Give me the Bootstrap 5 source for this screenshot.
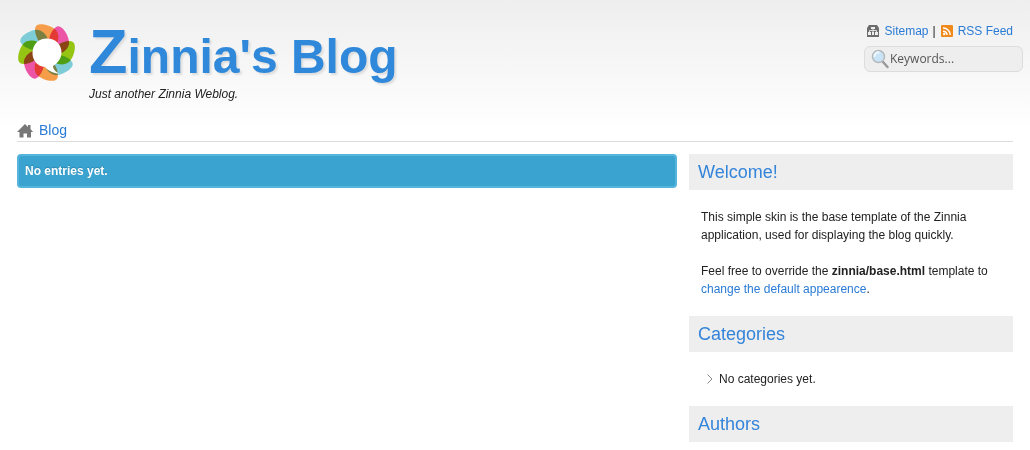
<!DOCTYPE html>
<html lang="en">
<head>
<meta charset="utf-8">
<meta name="viewport" content="width=device-width, initial-scale=1">
<title>Zinnia's Blog</title>
<link href="https://cdn.jsdelivr.net/npm/bootstrap@5.3.0/dist/css/bootstrap.min.css" rel="stylesheet">
<style>
body { font: 12px/18px "Liberation Sans", Arial, sans-serif; color: #222; background: #fff linear-gradient(#eee, #fff 130px) no-repeat; }
a { color: #2a7bd5; text-decoration: none; }
a:hover { text-decoration: underline; }
.page { padding: 0 17px; }
.masthead { padding-top: 23px; height: 122px; }
.brand { gap: 12px; }
.petals use { mix-blend-mode: multiply; }
.site-title { font-size: 48px; line-height: 56px; font-weight: bold; margin: 0; text-shadow: 2px 2px 2px #ddd; }
.site-title a { color: #2f88da; display: block; }
.site-title a::first-letter { font-size: 63px; line-height: 56px; }
.tagline { font-style: italic; margin: 0; }
.tools { margin-right: -10px; }
.tool-links { line-height: 16px; margin-right: 10px; }
.search { width: 159px; height: 26px; margin-top: 7px; padding: 0 6px; border: 1px solid #ddd; border-radius: 6px; background: #eee; }
.search input { border: 0; background: transparent; font: 500 12px/16px "Open Sans", sans-serif; color: #555; min-width: 0; padding: 0; outline: 0; }
.search input::placeholder { color: #555; opacity: 1; }
.crumbs { font-size: 14px; line-height: 16px; height: 20px; gap: 6px; border-bottom: 1px solid #ddd; }
.columns { display: grid; grid-template-columns: 660fr 324fr; gap: 12px; padding-top: 12px; align-items: start; }
.notice { border: 2px solid #56b5dc; border-radius: 4px; background: #3aa3cf; color: #fff; font-weight: bold; padding: 6px; text-shadow: 0 -1px 1px #2c86ae; }
.side-title { font-size: 18px; line-height: 36px; font-weight: normal; color: #3484da; background: #eee; padding: 0 9px; margin: 0; }
.side-body { padding: 18px 12px; }
.side-body p { margin: 0 0 18px; }
.side-body p:last-child { margin: 0; }
.side-body ul { padding-left: 6px; }
.side-body li { gap: 6px; }
</style>
</head>
<body>
<div class="page">
  <header>
    <div class="masthead d-flex justify-content-between">
      <div class="brand d-flex">
        <svg class="flex-shrink-0" width="60" height="60" viewBox="0 0 60 60" aria-hidden="true">
          <defs><path id="petal" d="M23 20C18 13 17 6 19 3C22 -1 34 2 39 7C42 11 42 16 40 21L30 26Z"/></defs>
          <g class="petals" opacity=".92">
            <use href="#petal" fill="#f6963c"/>
            <use href="#petal" fill="#ec48a0" transform="rotate(45 29.5 29.5)"/>
            <use href="#petal" fill="#8ec000" transform="rotate(90 29.5 29.5)"/>
            <use href="#petal" fill="#74c9d6" transform="rotate(135 29.5 29.5)"/>
            <use href="#petal" fill="#f6963c" transform="rotate(180 29.5 29.5)"/>
            <use href="#petal" fill="#ec48a0" transform="rotate(225 29.5 29.5)"/>
            <use href="#petal" fill="#8ec000" transform="rotate(270 29.5 29.5)"/>
            <use href="#petal" fill="#74c9d6" transform="rotate(315 29.5 29.5)"/>
          </g>
          <path fill="#fff" d="M30 15.500C38.500 15.500 44.500 21.500 44.500 29.500C44.500 35 41 40 36 43C36 46 38.500 49 42 50.500C37 50.500 31.500 48 28 44C20.500 43.500 15.500 37.500 15.500 30C15.500 21.500 21.500 15.500 30 15.500Z"/>
        </svg>
        <div>
          <h1 class="site-title"><a href="#">Zinnia's Blog</a></h1>
          <p class="tagline">Just another Zinnia Weblog.</p>
        </div>
      </div>
      <div class="tools d-flex flex-column align-items-end">
        <nav class="tool-links d-flex align-items-center" aria-label="Tools">
          <svg class="me-1" width="14" height="14" viewBox="0 0 14 14" aria-hidden="true"><path fill="#6c6c6c" d="M3 1h8l2 3v9H1V4z"/><path fill="none" stroke="#ddd" d="M7 4v5M3.500 9V6.500h7V9"/><path fill="#eee" d="M5 3h4v2H5zM2 8h3v3H2zM6 8h2v3H6zM9 8h3v3H9z"/></svg>
          <a href="#">Sitemap</a><span class="mx-1">|</span>
          <svg class="me-1" width="14" height="14" viewBox="0 0 14 14" aria-hidden="true"><rect x="1" y="1" width="12" height="12" rx="1" fill="#f08a1d"/><g fill="none" stroke="#fff" stroke-width="1.500"><path d="M3 7.200A4 4 0 0 1 7 11M3 4A7 7 0 0 1 10.200 11"/></g><circle cx="4.200" cy="10" r="1.200" fill="#fff"/></svg>
          <a href="#">RSS Feed</a>
        </nav>
        <form class="search d-flex align-items-center" role="search">
          <svg class="flex-shrink-0" width="19" height="20" viewBox="0 0 19 20" aria-hidden="true"><path stroke="#999" stroke-width="2.500" stroke-linecap="round" d="M12 13l4.500 5"/><circle cx="7.500" cy="7.500" r="6" fill="#c9e4f6" stroke="#b5b8ba" stroke-width="1.500"/><path d="M3.500 8a4 4 0 0 1 5-4.500" fill="none" stroke="#eef8ff" stroke-width="2"/></svg>
          <input class="flex-fill" type="text" placeholder="Keywords..." aria-label="Keywords">
        </form>
      </div>
    </div>
    <nav class="crumbs d-flex align-items-start" aria-label="Breadcrumb">
      <svg width="16" height="16" viewBox="0 0 16 16" aria-hidden="true"><path fill="#777" d="M8 2l3 3V3h2.500v4L16 10h-2v5.500h-4v-4H6.500v4h-4V10H0z"/></svg>
      <a href="#">Blog</a>
    </nav>
  </header>
  <div class="columns">
    <main><div class="notice">No entries yet.</div></main>
    <aside>
      <section>
        <h2 class="side-title">Welcome!</h2>
        <div class="side-body">
          <p>This simple skin is the base template of the Zinnia application, used for displaying the blog quickly.</p>
          <p>Feel free to override the <strong>zinnia/base.html</strong> template to <a href="#">change the default appearence</a>.</p>
        </div>
      </section>
      <section>
        <h2 class="side-title">Categories</h2>
        <div class="side-body">
          <ul class="list-unstyled mb-0">
            <li class="d-flex align-items-center"><svg width="6" height="10" viewBox="0 0 6 10" aria-hidden="true"><path d="M.5.5L5 5 .5 9.500" fill="none" stroke="#888"/></svg>No categories yet.</li>
          </ul>
        </div>
      </section>
      <section>
        <h2 class="side-title">Authors</h2>
      </section>
    </aside>
  </div>
</div>
<script src="https://cdn.jsdelivr.net/npm/bootstrap@5.3.0/dist/js/bootstrap.bundle.min.js"></script>
</body>
</html>
